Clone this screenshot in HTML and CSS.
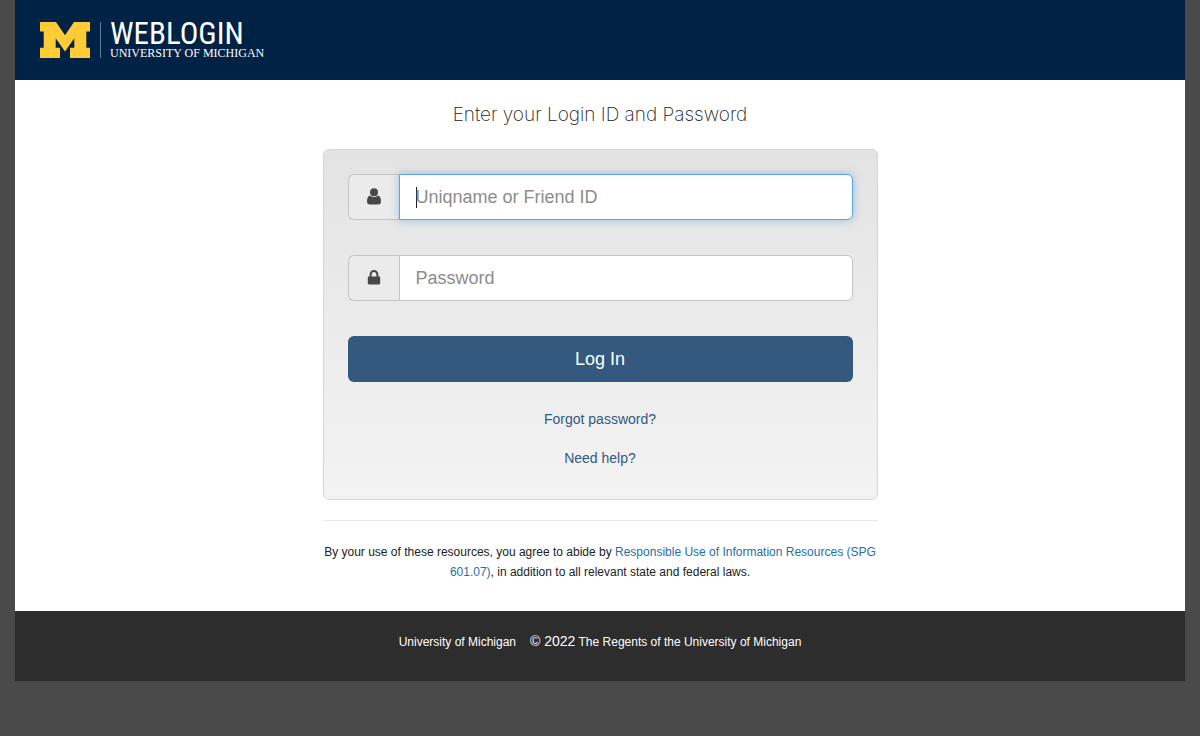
FILE: index.html
```html
<!DOCTYPE html>
<html lang="en">
<head>
  <meta charset="UTF-8" />
  <meta name="viewport" content="width=device-width, initial-scale=1" />
  <title>U-M Weblogin</title>
  <link rel="stylesheet" href="styles.css">
</head>
<body>
  <div class="container">
    <header class="header">
      <svg class="block-m" viewBox="0 0 50 36" aria-hidden="true">
        <path d="M0 0H16L25 13.3L34 0H50V9.6H46.3V25.8H50V36H30V25.8H34.3V16.2L25 29.6L15.7 16.2V25.8H20V36H0V25.8H3.7V9.6H0Z" />
      </svg>
      <div class="brand">
        <span class="brand-name">WEBLOGIN</span>
        <span class="brand-school">UNIVERSITY OF MICHIGAN</span>
      </div>
    </header>

    <main class="content">
      <h1>Enter your Login ID and Password</h1>

      <form class="well">
        <div class="input-group">
          <label for="login" class="addon" aria-label="Uniqname or Friend ID">
            <svg class="icon" viewBox="0 0 14 18" aria-hidden="true">
              <circle cx="7" cy="4.2" r="4" />
              <path d="M3.3 7.4C1.1 7.7 0 10 0 13.4C0 15.2 1.1 16.4 2.8 16.4H11.2C12.9 16.4 14 15.2 14 13.4C14 10 12.9 7.7 10.7 7.4C9.7 8.4 8.4 8.9 7 8.9S4.3 8.4 3.3 7.4Z" />
            </svg>
          </label>
          <input type="text" id="login" placeholder="Uniqname or Friend ID" autofocus />
        </div>

        <div class="input-group">
          <label for="password" class="addon" aria-label="Password">
            <svg class="icon" viewBox="0 0 14 18" aria-hidden="true">
              <path fill-rule="evenodd" d="M2.6 7.5V5.4C2.6 2.9 4.5 1 7 1S11.4 2.9 11.4 5.4V7.5H12C12.7 7.5 13.2 8 13.2 8.7V14.3C13.2 15 12.7 15.5 12 15.5H2C1.3 15.5 0.8 15 0.8 14.3V8.7C0.8 8 1.3 7.5 2 7.5ZM4.6 7.5H9.4V5.4C9.4 4 8.4 3 7 3S4.6 4 4.6 5.4Z" />
            </svg>
          </label>
          <input type="password" id="password" placeholder="Password" />
        </div>

        <button type="submit">Log In</button>

        <a href="#forgot" class="help-link">Forgot password?</a>
        <a href="#help" class="help-link">Need help?</a>
      </form>

      <hr />

      <p class="terms">By your use of these resources, you agree to abide by <a href="#spg">Responsible Use of Information Resources (SPG 601.07)</a>, in addition to all relevant state and federal laws.</p>
    </main>

    <footer class="footer">
      <a href="#umich">University of Michigan</a>
      <span><span class="copyright">© 2022</span> <a href="#regents">The Regents of the University of Michigan</a></span>
    </footer>
  </div>
</body>
</html>
```
FILE: styles.css
```css
* {
  box-sizing: border-box;
}

body {
  margin: 0;
  padding: 0 15px;
  background: #4a4a4a;
  color: #222;
  font-family: "Liberation Sans", Arial, sans-serif;
  font-size: 14px;
  line-height: 20px;
}

a {
  text-decoration: none;
}

.container {
  max-width: 1170px;
  margin: 0 auto;
  background: #fff;
}

/* Header */
.header {
  display: flex;
  align-items: center;
  min-height: 80px;
  padding: 0 25px;
  background: #002244;
}

.block-m {
  width: 50px;
  height: 36px;
  fill: #ffcb36;
}

.brand {
  display: flex;
  flex-direction: column;
  height: 36px;
  margin-left: 10px;
  padding-left: 9px;
  border-left: 1px solid #5f7f9f;
  color: #fff;
  white-space: nowrap;
}

.brand-name {
  font-family: "Liberation Sans Narrow", "Roboto Condensed", Roboto, sans-serif;
  font-size: 31px;
  font-weight: 400;
  line-height: 24px;
}

.brand-school {
  font-family: "Liberation Serif", serif;
  font-size: 12px;
  line-height: 14px;
}

/* Login form */
.content {
  width: 50%;
  min-width: 300px;
  margin: 0 auto;
  padding: 20px 15px 29px;
}

h1 {
  margin: 0 0 19px;
  font-family: Inter, sans-serif;
  font-size: 19px;
  font-weight: 200;
  line-height: 30px;
  text-align: center;
}

.well {
  display: flex;
  flex-direction: column;
  padding: 24px 24px 31px;
  background: linear-gradient(#e3e3e3, #f3f3f3);
  border: 1px solid #d6d6d6;
  border-radius: 6px;
}

.input-group {
  display: flex;
  height: 46px;
  margin-bottom: 35px;
}

.addon {
  display: flex;
  align-items: center;
  justify-content: center;
  width: 51px;
  background: #ebebeb;
  border: 1px solid #c4c4c4;
  border-right: 0;
  border-radius: 6px 0 0 6px;
}

.icon {
  width: 14px;
  height: 18px;
  fill: #484848;
}

input {
  flex: 1;
  min-width: 0;
  padding: 10px 16px;
  background: #fff;
  border: 1px solid #c4c4c4;
  border-radius: 0 6px 6px 0;
  color: #444;
  font-family: inherit;
  font-size: 18px;
}

input::placeholder {
  color: #8c8c8c;
}

input:focus {
  border-color: #5ba3d9;
  box-shadow: 0 0 8px rgba(91, 163, 217, 0.6);
  outline: none;
}

/* Steady caret while the focused field is still empty */
input:focus:placeholder-shown {
  background: linear-gradient(#222, #222) 16px center / 1px 21px no-repeat #fff;
  caret-color: transparent;
}

button {
  height: 46px;
  margin-bottom: 8px;
  background: #33597f;
  border: none;
  border-radius: 6px;
  color: #fff;
  font-family: inherit;
  font-size: 18px;
  cursor: pointer;
}

.help-link {
  align-self: center;
  margin-top: 19px;
  color: #33597f;
}

hr {
  margin: 20px 0 21px;
  border: none;
  border-top: 1px solid #e8e8e8;
}

.terms {
  margin: 0;
  font-size: 12px;
  text-align: center;
}

.terms a {
  color: #1f6fa8;
}

/* Footer */
.footer {
  display: flex;
  flex-wrap: wrap;
  align-items: baseline;
  align-content: flex-start;
  justify-content: center;
  gap: 14px;
  min-height: 70px;
  padding: 20px 15px;
  background: #2d2d2d;
  color: #fff;
  font-size: 12px;
}

.footer a {
  color: #fff;
}

.copyright {
  font-size: 14px;
}
```
